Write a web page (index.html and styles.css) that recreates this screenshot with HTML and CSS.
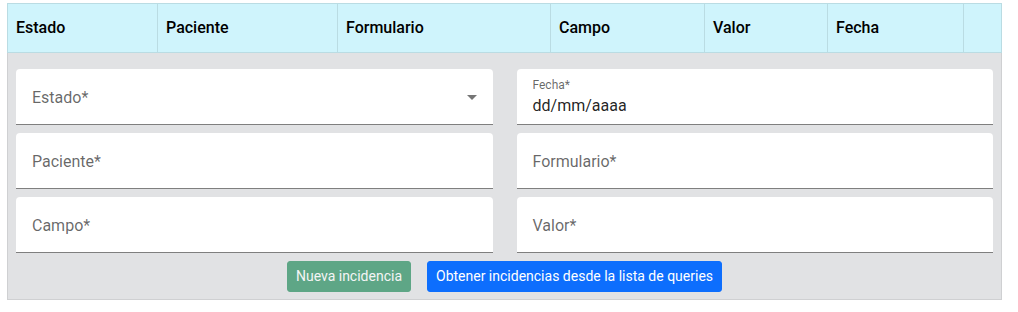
FILE: index.html
```html
<!DOCTYPE html>
<html lang="es">

<head>
    <meta charset="UTF-8">
    <meta name="viewport" content="width=device-width, initial-scale=1.0">
    <title>Incidencias</title>
    <link rel="stylesheet" href="styles.css">
</head>

<body>
    <div class="incidencias">
        <table class="incidencias-table">
            <thead>
                <tr>
                    <th class="col-estado">Estado</th>
                    <th class="col-paciente">Paciente</th>
                    <th class="col-formulario">Formulario</th>
                    <th class="col-campo">Campo</th>
                    <th class="col-valor">Valor</th>
                    <th class="col-fecha">Fecha</th>
                    <th class="col-acciones"></th>
                </tr>
            </thead>
        </table>

        <!-- Formulario de nueva incidencia -->
        <div class="nueva-incidencia">
            <div class="fields">
                <div class="field">
                    <span class="field-label">Estado*</span>
                    <svg class="select-arrow" viewBox="0 0 24 24" width="24" height="24">
                        <path d="M7 10l5 5 5-5z"></path>
                    </svg>
                </div>
                <div class="field field-filled">
                    <span class="field-label-small">Fecha*</span>
                    <span class="field-value">dd/mm/aaaa</span>
                </div>
                <div class="field">
                    <span class="field-label">Paciente*</span>
                </div>
                <div class="field">
                    <span class="field-label">Formulario*</span>
                </div>
                <div class="field">
                    <span class="field-label">Campo*</span>
                </div>
                <div class="field">
                    <span class="field-label">Valor*</span>
                </div>
            </div>

            <div class="actions">
                <button class="btn btn-success" disabled>Nueva incidencia</button>
                <button class="btn btn-primary">Obtener incidencias desde la lista de queries</button>
            </div>
        </div>
    </div>
</body>

</html>
```

FILE: styles.css
```css
body {
    font-family: 'Roboto', 'Liberation Sans', sans-serif;
    margin: 0;
    padding: 3px 0 0 7px;
    background-color: #fff;
    color: #212529;
}

.incidencias {
    width: 995px;
}

.incidencias-table {
    width: 995px;
    border-collapse: collapse;
    table-layout: fixed;
}

.incidencias-table th {
    box-sizing: border-box;
    background-color: #cff4fc;
    border: 1px solid #badce3;
    color: #000;
    font-size: 16px;
    font-weight: 500;
    line-height: 24px;
    padding: 12px 8px;
    text-align: left;
}

.col-estado {
    width: 150px;
}

.col-paciente {
    width: 180px;
}

.col-formulario {
    width: 213px;
}

.col-campo {
    width: 154px;
}

.col-valor {
    width: 123px;
}

.col-fecha {
    width: 136px;
}

.nueva-incidencia {
    background-color: #e1e2e4;
    border: 1px solid #cfd0d2;
    border-top: none;
    padding: 16px 8px 7px 8px;
}

.fields {
    display: grid;
    grid-template-columns: 1fr 1fr;
    column-gap: 24px;
    row-gap: 8px;
}

.field {
    position: relative;
    height: 56px;
    box-sizing: border-box;
    background-color: #fff;
    border-radius: 4px 4px 0 0;
    border-bottom: 1px solid rgba(0, 0, 0, 0.5);
    display: flex;
    align-items: center;
    padding: 2px 16px 0 16px;
}

.field-label {
    font-size: 16px;
    color: rgba(0, 0, 0, 0.6);
}

.field-filled {
    flex-direction: column;
    align-items: flex-start;
    justify-content: flex-start;
    padding-top: 9px;
}

.field-label-small {
    font-size: 12px;
    line-height: 14px;
    color: rgba(0, 0, 0, 0.6);
}

.field-value {
    font-size: 16px;
    line-height: 20px;
    margin-top: 4px;
    color: rgba(0, 0, 0, 0.87);
}

.select-arrow {
    position: absolute;
    right: 9px;
    top: 16px;
    fill: rgba(0, 0, 0, 0.54);
}

.actions {
    display: flex;
    justify-content: center;
    gap: 16px;
    margin-top: 8px;
}

.btn {
    font-family: 'Roboto', 'Liberation Sans', sans-serif;
    font-size: 14px;
    line-height: 21px;
    padding: 4px 8px;
    border: 1px solid transparent;
    border-radius: 3px;
    color: #fff;
    cursor: pointer;
}

.btn-success {
    background-color: #198754;
    border-color: #198754;
    opacity: 0.65;
    cursor: default;
}

.btn-primary {
    background-color: #0d6efd;
    border-color: #0d6efd;
}
```
